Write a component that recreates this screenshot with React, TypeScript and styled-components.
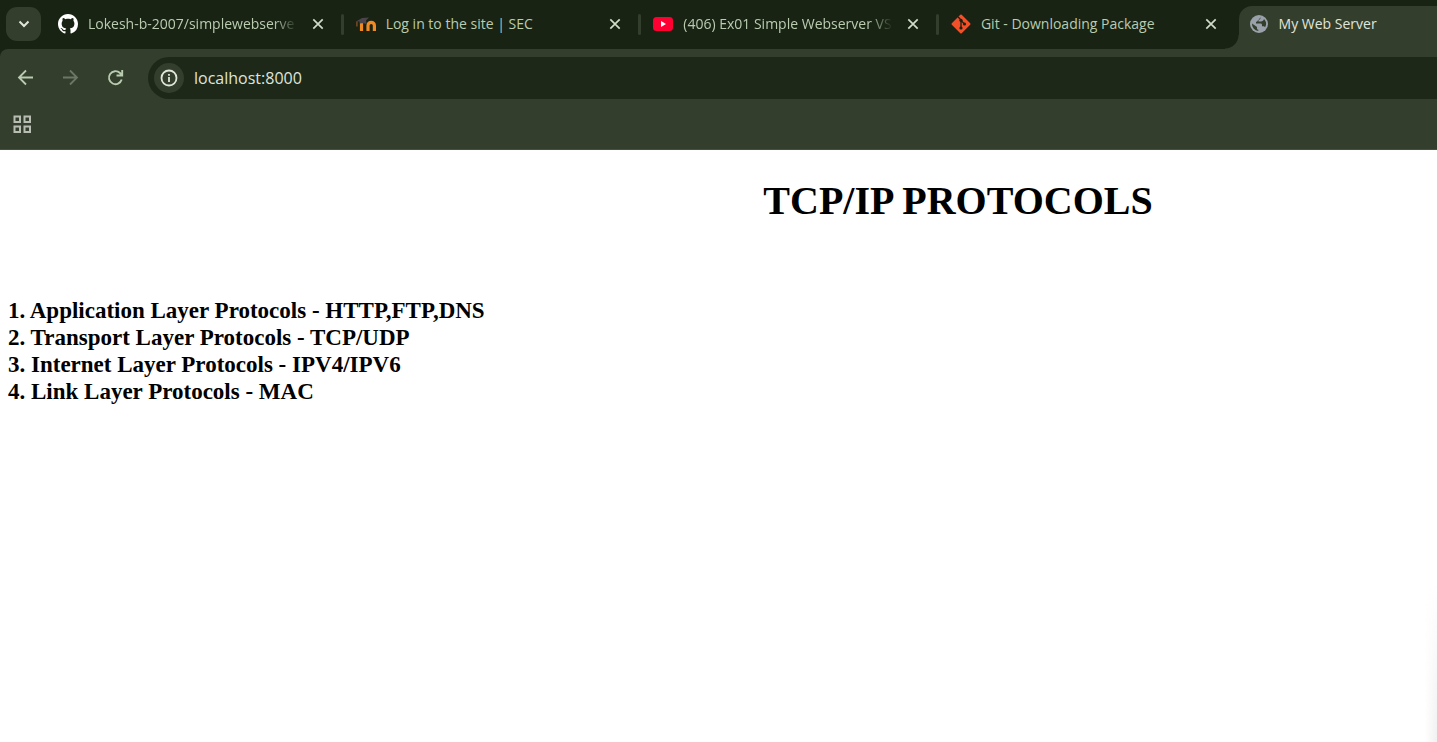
import React from 'react';
import styled, { createGlobalStyle, css } from 'styled-components';

const colors = {
  strip: '#182313',
  toolbar: '#333e2d',
  field: '#1e2819',
  tabText: '#b9ccb0',
  activeText: '#e0e6da',
  dim: '#6d7766',
};

const GlobalStyle = createGlobalStyle`
  * { box-sizing: border-box; }
  html, body, #root { height: 100%; }
  body { margin: 0; background: #fff; }
  button { border: 0; padding: 0; background: none; color: inherit; font: inherit; cursor: pointer; }
  svg { display: block; flex: none; }
`;

const Browser = styled.div`
  display: flex;
  flex-direction: column;
  min-height: 100%;
  font-family: 'Open Sans', 'Noto Sans', sans-serif;
`;

const TabStrip = styled.div`
  display: flex;
  height: 49px;
  background: ${colors.strip};
`;

const TabSearch = styled.button`
  display: grid;
  place-items: center;
  flex: none;
  width: 35px;
  height: 34px;
  margin: 7px 7px 0 6px;
  border-radius: 11px;
  background: ${colors.toolbar};
  color: ${colors.activeText};
`;

const TabList = styled.div`
  display: grid;
  flex: 1;
  min-width: 0;
  grid-template-columns: repeat(4, minmax(0, 3fr)) minmax(0, 2fr);
`;

const Tab = styled.div<{ $active?: boolean; $divider?: boolean }>`
  position: relative;
  display: flex;
  align-items: center;
  min-width: 0;
  padding: 0 2px 1px 10px;
  color: ${colors.tabText};

  ${({ $divider }) =>
    $divider &&
    css`
      &::after {
        content: '';
        width: 3px;
        height: 21px;
        margin-left: 13px;
        border-radius: 2px;
        background: ${colors.toolbar};
      }
    `}

  ${({ $active }) =>
    $active &&
    css`
      margin-top: 6px;
      padding-bottom: 7px;
      border-top-left-radius: 13px;
      background: ${colors.toolbar};
      color: ${colors.activeText};
      &::before {
        content: '';
        position: absolute;
        left: -14px;
        bottom: 0;
        width: 14px;
        height: 14px;
        background: radial-gradient(circle at 0 0, transparent 13px, ${colors.toolbar} 14px);
      }
    `}
`;

const TabButton = styled.button`
  display: flex;
  flex: 1;
  align-items: center;
  gap: 10px;
  min-width: 0;
  height: 36px;
  text-align: left;
`;

const TabTitle = styled.span<{ $fade?: boolean }>`
  flex: 1;
  min-width: 0;
  overflow: hidden;
  white-space: nowrap;
  font-size: 14px;
  line-height: 22px;
  ${({ $fade }) => $fade && css`mask-image: linear-gradient(to right, #000 calc(100% - 24px), transparent);`}
`;

const CloseButton = styled.button<{ $last?: boolean }>`
  display: grid;
  place-items: center;
  flex: none;
  width: 20px;
  height: 20px;
  margin-left: 10px;
  margin-right: ${({ $last }) => ($last ? '16px' : '0')};
  color: #cfdcc8;
`;

const ToolbarBacking = styled.div`
  background: ${colors.strip};
`;

const Toolbar = styled.div`
  display: flex;
  align-items: center;
  height: 58px;
  padding-left: 14px;
  background: ${colors.toolbar};
  border-top-left-radius: 8px;
`;

const NavButtons = styled.div`
  display: flex;
  gap: 21px;
  margin-right: 20px;
`;

const NavButton = styled.button`
  display: grid;
  place-items: center;
  width: 24px;
  height: 24px;
  color: ${colors.tabText};
  &:disabled { color: ${colors.dim}; }
`;

const AddressBar = styled.div`
  display: flex;
  flex: 1;
  align-items: center;
  gap: 10px;
  min-width: 0;
  height: 42px;
  padding-left: 6px;
  border-radius: 21px 0 0 21px;
  background: ${colors.field};
`;

const SiteInfo = styled.button`
  display: grid;
  place-items: center;
  flex: none;
  width: 30px;
  height: 30px;
  border-radius: 50%;
  background: ${colors.toolbar};
  color: ${colors.activeText};
`;

const AddressInput = styled.input`
  flex: 1;
  min-width: 0;
  height: 30px;
  padding: 0;
  border: 0;
  outline: 0;
  background: transparent;
  color: #dfe4da;
  font: 16px/24px 'Open Sans', 'Noto Sans', sans-serif;
`;

const BookmarksBar = styled.div`
  display: flex;
  align-items: center;
  height: 43px;
  padding: 0 0 8px 12px;
  border-bottom: 1px solid #4a4d45;
  background: ${colors.toolbar};
`;

const AppsButton = styled.button`
  color: #b7bdb2;
`;

const Page = styled.main`
  position: relative;
  flex: 1;
  padding: 28px 0;
  background: #fff;
  color: #000;
  font-family: 'Liberation Serif', 'Times New Roman', serif;

  &::after {
    content: '';
    position: absolute;
    right: 0;
    bottom: 0;
    width: 12px;
    height: 160px;
    background: linear-gradient(to right, transparent, #f0f0f0);
    mask-image: linear-gradient(transparent, #000);
  }
`;

const PageTitle = styled.h1`
  margin: 0 0 73px;
  padding-left: calc(100% / 3);
  text-align: center;
  font-size: 40px;
  line-height: 46px;
`;

const ProtocolList = styled.ol`
  margin: 0;
  padding: 0 8px;
  list-style: none;
  font-size: 23px;
  font-weight: bold;
  line-height: 27px;
`;

const GithubIcon = () => (
  <svg width="20" height="20" viewBox="0 0 16 16" fill="#fff">
    <path d="M8 0C3.58 0 0 3.58 0 8c0 3.54 2.29 6.53 5.47 7.59.4.07.55-.17.55-.38 0-.19-.01-.82-.01-1.49-2.01.37-2.53-.49-2.69-.94-.09-.23-.48-.94-.82-1.13-.28-.15-.68-.52-.01-.53.63-.01 1.08.58 1.23.82.72 1.21 1.87.87 2.33.66.07-.52.28-.87.51-1.07-1.78-.2-3.64-.89-3.64-3.95 0-.87.31-1.59.82-2.15-.08-.2-.36-1.02.08-2.12 0 0 .67-.21 2.2.82.64-.18 1.32-.27 2-.27s1.36.09 2 .27c1.53-1.04 2.2-.82 2.2-.82.44 1.1.16 1.92.08 2.12.51.56.82 1.27.82 2.15 0 3.07-1.87 3.75-3.65 3.95.29.25.54.73.54 1.48 0 1.07-.01 1.93-.01 2.2 0 .21.15.46.55.38A8.01 8.01 0 0 0 16 8c0-4.42-3.58-8-8-8z" />
  </svg>
);

const MoodleIcon = () => (
  <svg width="20" height="20" viewBox="0 0 20 20" fill="none">
    <path d="M5.500 17V7.500M12 17v-5.500a3.200 3.200 0 0 1 6.400 0V17" stroke="#f08a24" strokeWidth="3.200" />
    <path d="M0 7.500 6 4l7-.5-3 3 .5 3.500C8 9 6 9 4 9.500L3.500 7.500z" fill="#4c444b" />
    <path d="M.9 7.500v5" stroke="#7a4b2a" strokeWidth="1.500" />
  </svg>
);

const YoutubeIcon = () => (
  <svg width="20" height="20" viewBox="0 0 20 20">
    <rect y="3" width="20" height="14" rx="3.500" fill="#ff0033" />
    <path d="m8 7 5 3-5 3z" fill="#fff" />
  </svg>
);

const GitIcon = () => (
  <svg width="20" height="20" viewBox="0 0 20 20">
    <rect x="3" y="3" width="14" height="14" rx="1" fill="#f34f29" transform="rotate(45 10 10)" />
    <path d="M7 2.800 10 6v8M10 6.500l3.500 3.500" fill="none" stroke={colors.strip} strokeWidth="1.300" />
    <g fill={colors.strip}>
      <circle cx="10" cy="6.300" r="1.600" />
      <circle cx="10" cy="14" r="1.600" />
      <circle cx="13.500" cy="10" r="1.600" />
    </g>
  </svg>
);

const GlobeIcon = () => (
  <svg width="20" height="20" viewBox="0 0 20 20">
    <circle cx="10" cy="10" r="9" fill="#9ba1aa" />
    <path
      d="M11.500 3.200c.3 1.600-.8 2.600-2.500 2.800-.2 1.200-.8 1.800-2 1.800v1.700h4.500c1 0 1.500.7 1.500 1.500v1.200h1.200c.9 0 1.600.4 1.900 1.100A7 7 0 0 0 15 5c-.3 1.600-1.500 2.500-3 2.500H9.500V6zM3 9.500l5 3.500v1.500c0 .8.500 1.200 1.300 1.200V17A7 7 0 0 1 3 9.500z"
      fill={colors.toolbar}
    />
  </svg>
);

const CloseIcon = () => (
  <svg width="12" height="12" viewBox="0 0 12 12" fill="none" stroke="currentColor" strokeWidth="1.700">
    <path d="m1.300 1.300 9.400 9.400m0-9.400-9.400 9.400" />
  </svg>
);

const BackIcon = () => (
  <svg width="18" height="18" viewBox="0 0 18 18" fill="none" stroke="currentColor" strokeWidth="1.800">
    <path d="M16 8.500H2.500M9 1.500l-7 7 7 7" />
  </svg>
);

const ForwardIcon = () => (
  <svg width="18" height="18" viewBox="0 0 18 18" fill="none" stroke="currentColor" strokeWidth="1.800">
    <path d="M1 8.500h13.500M8 1.500l7 7-7 7" />
  </svg>
);

const ReloadIcon = () => (
  <svg width="18" height="18" viewBox="0 0 18 18" fill="none" stroke="currentColor" strokeWidth="1.900">
    <path d="M14.700 10.500A6.500 6.500 0 1 1 13 4l2 2.200M15.200 1v5.500H9.500" />
  </svg>
);

const tabs = [
  { title: 'Lokesh-b-2007/simplewebserve', Icon: GithubIcon, fade: true },
  { title: 'Log in to the site | SEC', Icon: MoodleIcon },
  { title: '(406) Ex01 Simple Webserver VS', Icon: YoutubeIcon, fade: true },
  { title: 'Git - Downloading Package', Icon: GitIcon },
];

const protocols = [
  '1. Application Layer Protocols - HTTP,FTP,DNS',
  '2. Transport Layer Protocols - TCP/UDP',
  '3. Internet Layer Protocols - IPV4/IPV6',
  '4. Link Layer Protocols - MAC',
];

export default function App() {
  return (
    <Browser>
      <GlobalStyle />
      <TabStrip>
        <TabSearch aria-label="Search tabs">
          <svg width="12" height="12" viewBox="0 0 12 12" fill="none" stroke="currentColor" strokeWidth="2">
            <path d="m1.500 3.500 4.500 4.500 4.500-4.500" />
          </svg>
        </TabSearch>
        <TabList>
          {tabs.map(({ title, Icon, fade }, i) => (
            <Tab key={title} $divider={i < 3}>
              <TabButton>
                <Icon />
                <TabTitle $fade={fade}>{title}</TabTitle>
              </TabButton>
              <CloseButton aria-label={`Close ${title}`} $last={i === 3}>
                <CloseIcon />
              </CloseButton>
            </Tab>
          ))}
          <Tab $active>
            <TabButton aria-current="page">
              <GlobeIcon />
              <TabTitle>My Web Server</TabTitle>
            </TabButton>
          </Tab>
        </TabList>
      </TabStrip>
      <ToolbarBacking>
        <Toolbar>
          <NavButtons>
            <NavButton aria-label="Back"><BackIcon /></NavButton>
            <NavButton aria-label="Forward" disabled><ForwardIcon /></NavButton>
            <NavButton aria-label="Reload"><ReloadIcon /></NavButton>
          </NavButtons>
          <AddressBar>
            <SiteInfo aria-label="View site information">
              <svg width="18" height="18" viewBox="0 0 18 18" fill="none" stroke="currentColor" strokeWidth="1.800">
                <circle cx="9" cy="9" r="7.500" />
                <path d="M9 8v5M9 5v1.800" />
              </svg>
            </SiteInfo>
            <AddressInput aria-label="Address" defaultValue="localhost:8000" spellCheck={false} />
          </AddressBar>
        </Toolbar>
      </ToolbarBacking>
      <BookmarksBar>
        <AppsButton aria-label="Apps">
          <svg width="20" height="20" viewBox="0 0 20 20" fill="none" stroke="currentColor" strokeWidth="2">
            <path d="M2.500 2.500h5.500v5.500h-5.500zM12.500 2.500h5.500v5.500h-5.500zM2.500 12.500h5.500v5.500h-5.500zM12.500 12.500h5.500v5.500h-5.500z" />
          </svg>
        </AppsButton>
      </BookmarksBar>
      <Page>
        <PageTitle>TCP/IP PROTOCOLS</PageTitle>
        <ProtocolList>
          {protocols.map((line) => (
            <li key={line}>{line}</li>
          ))}
        </ProtocolList>
      </Page>
    </Browser>
  );
}
